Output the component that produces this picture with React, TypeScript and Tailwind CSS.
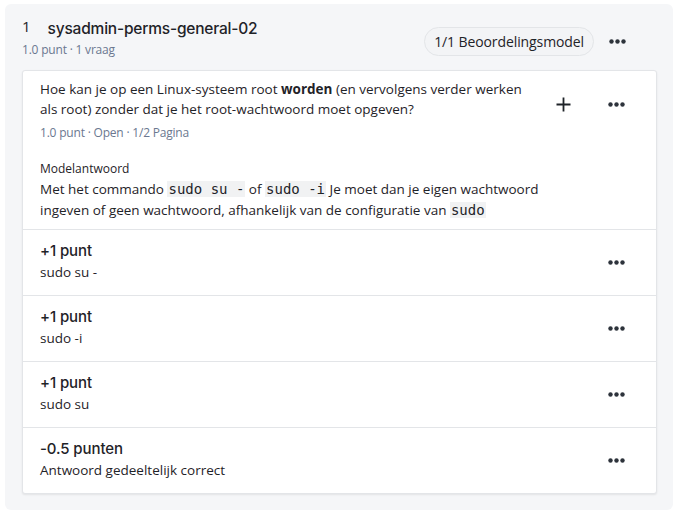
import React from 'react';

const font = { fontFamily: '"Open Sans", "Noto Sans", sans-serif' };

function Dots() {
  return (
    <svg width="17" height="5" viewBox="0 0 17 5" className="text-[#2d333b]" fill="currentColor">
      <circle cx="2.5" cy="2.5" r="2.2" />
      <circle cx="8.5" cy="2.5" r="2.2" />
      <circle cx="14.5" cy="2.5" r="2.2" />
    </svg>
  );
}

function Plus() {
  return (
    <svg width="15" height="15" viewBox="0 0 15 15" className="text-[#1f2328]">
      <path d="M7.5 0.5v14M0.5 7.5h14" stroke="currentColor" strokeWidth="1.8" />
    </svg>
  );
}

function Code({ children }: { children: React.ReactNode }) {
  return (
    <code className="bg-[#f1f2f3] px-[1px] font-['DejaVu_Sans_Mono',monospace] text-[14px]">
      {children}
    </code>
  );
}

const criteria = [
  { points: '+1 punt', text: 'sudo su -' },
  { points: '+1 punt', text: 'sudo -i' },
  { points: '+1 punt', text: 'sudo su' },
  { points: '-0.5 punten', text: 'Antwoord gedeeltelijk correct' },
];

export default function App() {
  return (
    <div className="w-[680px] h-[519px] bg-white pl-[5px] pt-[4px] text-[#1f2328]" style={font}>
      <div className="w-[668px] h-[506px] rounded-md bg-[#f5f6f8] pl-[17px] pr-[16px]">
        {/* Header */}
        <div className="flex items-start justify-between pt-[12px] h-[66px]">
          <div>
            <div className="flex items-baseline gap-[17px]">
              <span className="text-[15px] leading-6 relative -top-[2px]">1</span>
              <span className="text-[15.5px] leading-6 font-medium font-['Inter',sans-serif] tracking-[-0.2px]">sysadmin-perms-general-02</span>
            </div>
            <div className="text-[12px] leading-4 text-[#6b7890] mt-[1px] tracking-[-0.2px]">1.0 punt · 1 vraag</div>
          </div>
          <div className="flex items-center pt-[11px] pr-[31px]">
            <span className="rounded-full border border-[#e3e5e8] bg-[#f3f4f6] px-[9px] h-[29px] flex items-center text-[14px] tracking-[-0.1px]">
              1/1 Beoordelingsmodel
            </span>
            <span className="ml-[15px] flex">
              <Dots />
            </span>
          </div>
        </div>

        {/* Card */}
        <div className="bg-white border border-[#e3e5e8] rounded-[3px] shadow-[0_1px_2px_rgba(0,0,0,0.08)]">
          <div className="flex justify-between pl-[17px] pr-[31px] pt-[8px] pb-[8px]">
            <div className="w-[500px] text-[13.5px]">
              <p className="leading-5 whitespace-nowrap">
                Hoe kan je op een Linux-systeem root <b className="font-bold">worden</b> (en vervolgens verder werken
                <br />
                als root) zonder dat je het root-wachtwoord moet opgeven?
              </p>
              <div className="mt-[6px] text-[12px] leading-4 text-[#6b7890] tracking-[-0.2px]">1.0 punt · Open · 1/2 Pagina</div>
              <div className="mt-[20px] text-[12px] leading-4">Modelantwoord</div>
              <p className="mt-[2px] leading-[21px] whitespace-nowrap">
                Met het commando <Code>sudo su -</Code> of <Code>sudo -i</Code> Je moet dan je eigen wachtwoord
                <br />
                ingeven of geen wachtwoord, afhankelijk van de configuratie van <Code>sudo</Code>
              </p>
            </div>
            <div className="flex items-center gap-[37px] h-[50px]">
              <Plus />
              <Dots />
            </div>
          </div>
          {criteria.map((c, i) => (
            <div key={i} className="flex items-center justify-between border-t border-[#e3e5e8] h-[66px] pl-[17px] pr-[31px]">
              <div className="pb-[4px]">
                <div className="text-[15px] leading-[22px] font-medium font-['Inter',sans-serif] tracking-[-0.1px]">{c.points}</div>
                <div className="text-[13.5px] leading-5">{c.text}</div>
              </div>
              <Dots />
            </div>
          ))}
        </div>
      </div>
    </div>
  );
}
